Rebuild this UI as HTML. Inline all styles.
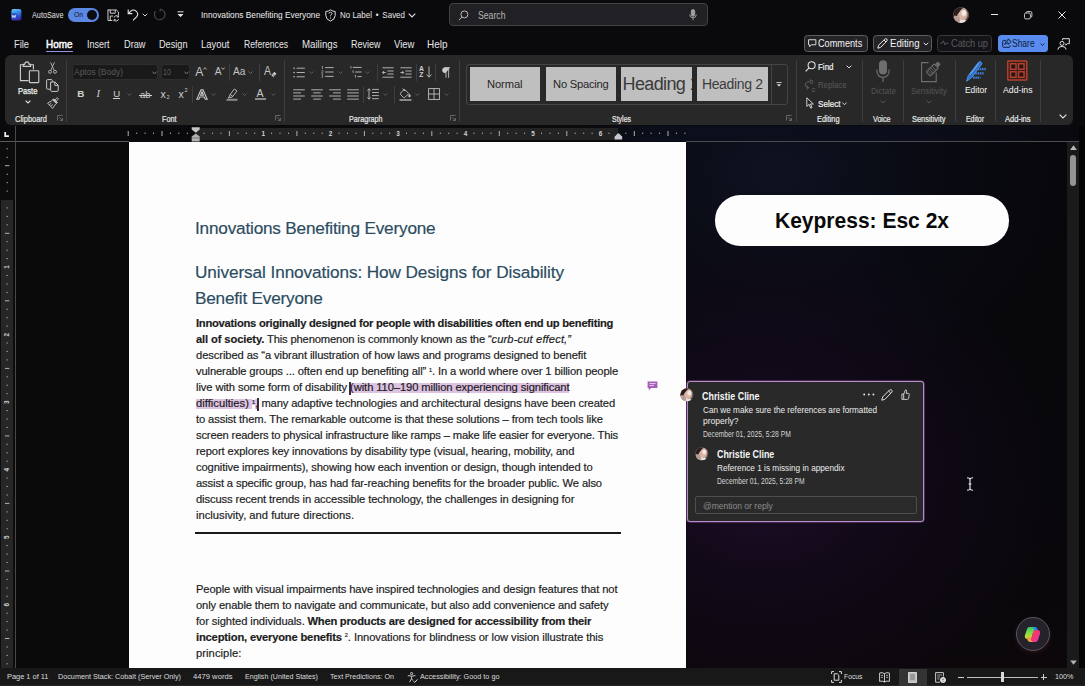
<!DOCTYPE html>
<html><head><meta charset="utf-8"><title>Word</title>
<style>
*{box-sizing:border-box;margin:0;padding:0}
html,body{width:1085px;height:686px;overflow:hidden;background:#0b0b0f;font-family:"Liberation Sans",sans-serif;}
.abs{position:absolute}
.t{position:absolute;white-space:pre;line-height:1;-webkit-text-stroke:0.18px currentColor}
.t .b{font-weight:bold}
.t .i{font-style:italic}
.t .sup{font-size:50%;position:relative;top:-0.62em}
.t .hl{background:linear-gradient(#dec2e2,#dec2e2) no-repeat 0 1.2px / 100% 11px}
#root{position:absolute;left:0;top:0;width:1085px;height:686px;overflow:hidden;
 background:#0a0a0d}
#rightbg{position:absolute;left:686px;top:141px;width:399px;height:527px;
 background:
  radial-gradient(ellipse 290px 250px at 80px 330px, rgba(34,15,46,0.95) 0%, rgba(24,11,34,0.6) 40%, rgba(12,7,18,0) 100%),
  radial-gradient(ellipse 310px 230px at 90px 30px, rgba(14,18,32,1) 0%, rgba(10,12,22,0.6) 55%, rgba(7,7,10,0) 100%),
  linear-gradient(180deg,#07070a 0%,#08070b 60%,#0b070b 100%)}
#leftbg{position:absolute;left:14px;top:141px;width:115px;height:527px;background:#0a0a0a}
#page{position:absolute;left:128.5px;top:141.7px;width:557.5px;height:527px;background:#fdfdfe}
#ribbon{position:absolute;left:5px;top:55.3px;width:1068px;height:70px;background:#282828;border-radius:6px}
#status{position:absolute;left:0;top:668.4px;width:1085px;height:18px;background:#181818;border-bottom:1.2px solid #2a2523}
.lbl{position:absolute;font-size:8.5px;-webkit-text-stroke:0.2px #e8e8e8;color:#e8e8e8;line-height:1;white-space:pre}
.tab{position:absolute;font-size:10.5px;color:#e6e6e6;line-height:1;white-space:pre;top:39px}
.sep{position:absolute;width:1px;background:#3e3e3e}
.st{position:absolute;font-size:8px;color:#dcdcdc;line-height:1;white-space:pre;top:673px}
svg{position:absolute;overflow:visible}
.tt{position:absolute;line-height:1;white-space:pre}
.tile{position:absolute;top:67.3px;width:70.5px;height:33.7px;background:#bfbfbf;color:#262626;display:flex;align-items:center;justify-content:center;overflow:hidden;white-space:pre;line-height:1}
.ct{font-size:9.3px;color:#ececec}
.cd{font-size:8.2px;color:#d4d4d4}
</style></head><body>
<div id="root">
<div id="leftbg"></div>
<div id="rightbg"></div>
<div id="page"></div>

<!-- ============ TITLE BAR ============ -->
<div id="titlebar">
  <!-- word icon -->
  <svg style="left:11px;top:9px" width="10.4" height="11.6" viewBox="0 0 10.4 11.6">
    <defs><linearGradient id="wg" x1="0" y1="0" x2="0.3" y2="1"><stop offset="0" stop-color="#6ad0f4"/><stop offset="0.4" stop-color="#3a8fe8"/><stop offset="0.75" stop-color="#2b52d0"/><stop offset="1" stop-color="#3b2aa8"/></linearGradient></defs>
    <rect x="0.4" y="0" width="10" height="11.6" rx="2" fill="url(#wg)"/>
    <rect x="0" y="4.4" width="5.8" height="5.6" rx="1.2" fill="#2a48c4"/>
    <path d="M1 5.8 L1.9 8.6 L2.9 6.4 L3.9 8.6 L4.8 5.8" stroke="#fff" stroke-width="0.75" fill="none"/>
  </svg>
  <div class="tt" style="transform:scaleX(0.8671);transform-origin:0 0;left:32px;top:10.6px;font-size:8.4px;color:#e4e4e4">AutoSave</div>
  <div class="abs" style="left:67.8px;top:8.3px;width:31px;height:13.4px;border-radius:7px;background:#5b88e4"></div>
  <div class="tt" style="transform:scaleX(0.8433);transform-origin:0 0;left:73.5px;top:10.5px;font-size:8px;color:#10131c">On</div>
  <div class="abs" style="left:86.6px;top:10px;width:10px;height:10px;border-radius:5px;background:#0c0c12"></div>
  <!-- save icon -->
  <svg style="left:107px;top:8.5px" width="12.4" height="12.4" viewBox="0 0 13 13" fill="none" stroke="#d8d8d8" stroke-width="1">
    <path d="M1 1 H9.8 L12 3.2 V6.4"/><path d="M1 0.6 V12 H5.6"/>
    <path d="M3.4 1 V4.4 H8.6 V1"/><path d="M3.4 12 V7.4 H6.4"/>
    <path d="M7.4 9 A2.5 2.5 0 0 1 11.9 8.1 M12.1 6.7 V8.4 H10.4"/>
    <path d="M12.1 10.6 A2.5 2.5 0 0 1 7.6 11.5 M7.4 12.9 V11.2 H9.1"/>
  </svg>
  <!-- undo -->
  <svg style="left:127px;top:8px" width="12" height="13" viewBox="0 0 12 13" fill="none" stroke="#e4e4e4" stroke-width="1.1">
    <path d="M1.2 1.5 V5.6 H5.3"/><path d="M1.4 5.4 L3.6 3.3 A4.1 4.1 0 0 1 9.8 8.6 L6 12.3"/>
  </svg>
  <svg style="left:141.5px;top:12.5px" width="6" height="4" viewBox="0 0 6 4" fill="none" stroke="#d0d0d0" stroke-width="1"><path d="M0.7 0.7 L3 3 L5.3 0.7"/></svg>
  <!-- redo (disabled) -->
  <svg style="left:153px;top:8px" width="13" height="13" viewBox="0 0 13 13" fill="none" stroke="#4a4a4e" stroke-width="1.1">
    <path d="M7.5 1.2 A5.3 5.3 0 1 1 2.5 3.2"/><path d="M7.2 0.8 V3.6"/>
  </svg>
  <!-- customize qat -->
  <svg style="left:177px;top:11px" width="7" height="7" viewBox="0 0 7 7" fill="none" stroke="#e0e0e0" stroke-width="1"><path d="M0.5 0.8 H6.5"/><path d="M0.9 3 L3.5 5.7 L6.1 3" fill="#e0e0e0"/></svg>
  <div class="tt" style="transform:scaleX(0.8648);transform-origin:0 0;left:200.5px;top:10px;font-size:9.6px;color:#ececec">Innovations Benefiting Everyone</div>
  <!-- shield -->
  <svg style="left:325px;top:8.5px" width="11" height="13" viewBox="0 0 11 13" fill="none" stroke="#dcdcdc" stroke-width="1">
    <path d="M5.5 0.8 Q7.6 2.4 10.2 2.5 V6.4 Q10.2 10.3 5.5 12.2 Q0.8 10.3 0.8 6.4 V2.5 Q3.4 2.4 5.5 0.8 Z"/>
    <path d="M3.9 4.6 Q4 3.2 5.5 3.2 Q7.1 3.3 7 4.7 Q6.9 5.6 5.5 6.4 V7.4" stroke-width="0.9"/><circle cx="5.5" cy="9.1" r="0.6" fill="#dcdcdc" stroke="none"/>
  </svg>
  <div class="tt" style="transform:scaleX(0.8318);transform-origin:0 0;left:339.5px;top:10px;font-size:9.6px;color:#e6e6e6">No Label  •  Saved</div>
  <svg style="left:407.5px;top:12.5px" width="8" height="5" viewBox="0 0 8 5" fill="none" stroke="#e0e0e0" stroke-width="1.1"><path d="M0.7 0.7 L4 4 L7.3 0.7"/></svg>
  <!-- search -->
  <div class="abs" style="left:449px;top:3px;width:259px;height:23px;border-radius:4px;background:#212125;border:1px solid #424246"></div>
  <svg style="left:458px;top:9.5px" width="11" height="11" viewBox="0 0 11 11" fill="none" stroke="#b8b8b8" stroke-width="1"><circle cx="6.4" cy="4.4" r="3.5"/><path d="M3.9 7 L0.8 10.2"/></svg>
  <div class="tt" style="transform:scaleX(0.8679);transform-origin:0 0;left:478px;top:10.6px;font-size:10px;color:#b4b4b4">Search</div>
  <svg style="left:689px;top:9px" width="8" height="12" viewBox="0 0 8 12" fill="none" stroke="#a0a0a0" stroke-width="1"><rect x="2.3" y="0.6" width="3.4" height="6.6" rx="1.7" fill="#a0a0a0"/><path d="M0.7 5.5 A3.3 3.3 0 0 0 7.3 5.5 M4 8.8 V11.2"/></svg>
  <!-- avatar -->
  <svg style="left:952.9px;top:6.9px" width="16" height="16.2" viewBox="0 0 18 18">
    <defs><clipPath id="av0"><circle cx="9" cy="9" r="8.8"/></clipPath></defs>
    <g clip-path="url(#av0)"><rect width="18" height="18" fill="#c2a49a"/>
      <path d="M0 0 H13 Q9 2 7.4 5.4 Q5 7 4.6 10 L2 9.4 L0 12 Z" fill="#2c1e1a"/>
      <path d="M9 3.6 Q13.4 2.6 14.6 6.4 Q15.2 9.6 13 12.6 Q10.6 14.6 8.4 12.8 Q6.4 10.6 6.8 7.4 Q7.4 4.4 9 3.6 Z" fill="#dcb6a6"/>
      <ellipse cx="12.4" cy="6.6" rx="2.6" ry="3.2" fill="#f1e9e4"/>
      <path d="M14.6 3.4 Q17.4 6 16.2 10.6 Q15.6 13 13.4 14.6 L18 18 V0 Z" fill="#3a2a26" opacity="0.8"/>
      <path d="M8 13 Q10.6 15.4 13.6 13.8 L15 18 H6 Z" fill="#e9e1dc"/>
      <path d="M0 12 L4.4 10.4 Q5.4 13.4 8.4 14.4 L7 18 H0 Z" fill="#b89a92"/>
    </g>
  </svg>
  <!-- window controls -->
  <div class="abs" style="left:991px;top:14px;width:7.4px;height:1.1px;background:#e8e8e8"></div>
  <svg style="left:1024.2px;top:10.8px" width="8.4" height="8.4" viewBox="0 0 10 10" fill="none" stroke="#e8e8e8" stroke-width="1"><rect x="0.6" y="2.4" width="7" height="7" rx="1.6"/><path d="M2.6 2.2 V2 Q2.6 0.6 4 0.6 H7.6 Q9.4 0.6 9.4 2.4 V6 Q9.4 7.4 8 7.4"/></svg>
  <svg style="left:1058.3px;top:11px" width="8" height="8" viewBox="0 0 9 9"><path d="M0.5 0.5 L8.5 8.5 M8.5 0.5 L0.5 8.5" stroke="#f0f0f0" stroke-width="1.1"/></svg>
</div>

<!-- ============ TABS ============ -->
<div class="tab" style="transform:scaleX(0.8864);transform-origin:0 0;left:13.5px">File</div>
<div class="tab" style="transform:scaleX(0.9459);transform-origin:0 0;left:46px;top:39.4px;color:#fff;-webkit-text-stroke:0.45px #fff;font-size:10.5px;">Home</div>
<div class="abs" style="left:46px;top:50.8px;width:27px;height:1.5px;background:#9496e4;border-radius:1px"></div>
<div class="tab" style="transform:scaleX(0.8566);transform-origin:0 0;left:87px">Insert</div>
<div class="tab" style="transform:scaleX(0.8770);transform-origin:0 0;left:124px">Draw</div>
<div class="tab" style="transform:scaleX(0.8719);transform-origin:0 0;left:159px">Design</div>
<div class="tab" style="transform:scaleX(0.9039);transform-origin:0 0;left:201px">Layout</div>
<div class="tab" style="transform:scaleX(0.8193);transform-origin:0 0;left:244px">References</div>
<div class="tab" style="transform:scaleX(0.9217);transform-origin:0 0;left:302px">Mailings</div>
<div class="tab" style="transform:scaleX(0.8566);transform-origin:0 0;left:351px">Review</div>
<div class="tab" style="transform:scaleX(0.9080);transform-origin:0 0;left:394px">View</div>
<div class="tab" style="transform:scaleX(0.9487);transform-origin:0 0;left:427px">Help</div>

<!-- right buttons -->
<div class="abs" style="left:804px;top:35px;width:63.5px;height:17px;border:1px solid #5e5e62;border-radius:3.5px;background:#242428"></div>
<svg style="left:807.5px;top:39px" width="8.4" height="8.4" viewBox="0 0 9 9" fill="none" stroke="#e6e6e6" stroke-width="1"><path d="M0.6 0.8 H8.4 V6.2 H3.6 L1.8 8.2 V6.2 H0.6 Z"/></svg>
<div class="tt" style="transform:scaleX(0.8974);transform-origin:0 0;left:818.4px;top:38.5px;font-size:10.2px;color:#f2f2f2">Comments</div>
<div class="abs" style="left:873px;top:35px;width:58.5px;height:17px;border:1px solid #5e5e62;border-radius:3.5px;background:#242428"></div>
<svg style="left:876.5px;top:37.5px" width="11" height="11" viewBox="0 0 11 11" fill="none" stroke="#e6e6e6" stroke-width="1"><path d="M0.8 10.2 L1.6 7.3 L7.9 1 Q8.9 0.2 9.9 1.1 Q10.7 2.1 9.9 3 L3.6 9.4 Z"/><path d="M7 2 L9 4"/></svg>
<div class="tt" style="transform:scaleX(0.9468);transform-origin:0 0;left:890px;top:38.5px;font-size:10.2px;color:#f2f2f2">Editing</div>
<svg style="left:923px;top:42px" width="6" height="4" viewBox="0 0 6 4" fill="none" stroke="#e0e0e0" stroke-width="1"><path d="M0.7 0.7 L3 3 L5.3 0.7"/></svg>
<div class="abs" style="left:937px;top:35px;width:55px;height:17px;border:1px solid #38383c;border-radius:3.5px;background:#141418"></div>
<svg style="left:940px;top:40px" width="9" height="6" viewBox="0 0 9 6" fill="none" stroke="#55555a" stroke-width="1"><path d="M0.4 3.2 H2 L3.4 0.8 L5 5 L6.2 3.2 H8.6"/></svg>
<div class="tt" style="transform:scaleX(0.9073);transform-origin:0 0;left:951px;top:38.5px;font-size:10.2px;color:#5a5a5e">Catch up</div>
<div class="abs" style="left:998px;top:35px;width:49.5px;height:17px;border-radius:3.5px;background:#5a8cf0"></div>
<svg style="left:1001.5px;top:38px" width="10" height="10" viewBox="0 0 10 10" fill="none" stroke="#10203c" stroke-width="1"><path d="M3.8 2.4 H1.6 Q0.7 2.4 0.7 3.3 V8.4 Q0.7 9.3 1.6 9.3 H7.2 Q8.1 9.3 8.1 8.4 V7.4"/><path d="M6 0.8 L9.2 3.6 L6 6.4 V4.8 Q4 4.7 2.8 6.6 Q3 3 6 2.5 Z"/></svg>
<div class="tt" style="transform:scaleX(0.8313);transform-origin:0 0;left:1012px;top:38.5px;font-size:10.2px;color:#0c1c38">Share</div>
<svg style="left:1039.5px;top:42.5px" width="5" height="3" viewBox="0 0 5 3" fill="none" stroke="#10203c" stroke-width="0.9"><path d="M0.5 0.5 L2.5 2.5 L4.5 0.5"/></svg>
<svg style="left:1056.5px;top:37.5px" width="13" height="12" viewBox="0 0 13 12" fill="none" stroke="#e0e0e0" stroke-width="1"><circle cx="5" cy="5.4" r="2"/><path d="M0.8 11.6 Q1 8.4 5 8.4 Q9 8.4 9.2 11.6"/><path d="M5.6 2.2 V0.7 H12.3 V5.6 H10.4 L8.8 7.2 V5.6"/></svg>

<div id="ribbon"></div>
<!-- ===== Clipboard ===== -->
<svg style="left:19px;top:60.5px" width="21" height="23" viewBox="0 0 21 23" fill="none" stroke="#cdcdcd" stroke-width="1.1">
  <path d="M4.2 3.8 H1.4 V19.6 H9.6"/><path d="M11.6 3.8 H14.4 V8.6"/>
  <path d="M4.2 5.4 V3.4 H5.6 Q6 0.9 7.9 0.9 Q9.8 0.9 10.2 3.4 H11.6 V5.4 Z"/>
  <rect x="10.4" y="9.8" width="9.4" height="11.8" rx="0.6"/>
</svg>
<div class="tt" style="left:17.8px;top:85.8px;font-size:9.4px;color:#f6f6f6;-webkit-text-stroke:0.25px #f6f6f6;transform:scaleX(0.8090);transform-origin:0 0">Paste</div>
<svg style="left:24.6px;top:99.8px" width="6" height="4" viewBox="0 0 6 4" fill="none" stroke="#e0e0e0" stroke-width="1.1"><path d="M0.6 0.6 L3 3 L5.4 0.6"/></svg>
<!-- cut -->
<svg style="left:47.5px;top:61.5px" width="9" height="12" viewBox="0 0 9 12" fill="none" stroke="#b8b8b8" stroke-width="0.9">
  <path d="M2.6 0.4 L6.2 8.4 M6.4 0.4 L2.8 8.4"/><circle cx="2" cy="9.8" r="1.5"/><circle cx="7" cy="9.8" r="1.5"/>
</svg>
<!-- copy -->
<svg style="left:46px;top:78.5px" width="13" height="13" viewBox="0 0 13 13" fill="none" stroke="#c8c8c8" stroke-width="1">
  <path d="M4 10.2 H1.6 Q0.6 10.2 0.6 9.2 V1.6 Q0.6 0.6 1.6 0.6 H5.4 Q6.4 0.6 6.4 1.6 V2.6"/>
  <path d="M4.6 3 H9 L12.2 6.2 V11.4 Q12.2 12.4 11.2 12.4 H5.6 Q4.6 12.4 4.6 11.4 Z"/><path d="M8.8 3.2 V6.4 H12"/>
</svg>
<!-- format painter -->
<svg style="left:46.5px;top:96.5px" width="12" height="12" viewBox="0 0 12 12" fill="none" stroke="#c8c8c8" stroke-width="0.9">
  <path d="M8 3 L10.2 0.6 L11.4 1.8 L9.2 4.2"/><path d="M6.6 1.8 L10.4 5.6 L9.4 6.6 L5.6 2.8 Z" fill="#c8c8c8"/>
  <path d="M5.4 3.4 L0.6 6.2 L5.6 11.4 L8.8 6.8"/><path d="M2.4 7.6 L4.2 6.4 M3.8 9.2 L5.8 7.6"/>
</svg>
<div class="lbl" style="left:14.5px;top:114.7px;transform:scaleX(0.8793);transform-origin:0 0">Clipboard</div>
<svg class="lau" style="left:56.9px;top:115.4px" width="6" height="6" viewBox="0 0 6 6" fill="none" stroke="#6c6c6c" stroke-width="0.9"><path d="M0.5 5.5 V0.5 H5.5"/><path d="M2.3 2.3 L5.4 5.4 M5.5 3 V5.5 H3"/></svg>
<div class="sep" style="left:65.5px;top:60px;height:62px"></div>

<!-- ===== Font ===== -->
<div class="abs" style="left:71.8px;top:63.8px;width:86.4px;height:16.4px;border-radius:3.5px;background:#191919;border:1px solid #2e2e2e"></div>
<div class="tt" style="left:73.5px;top:67.1px;font-size:9.6px;color:#5a5a5a;transform:scaleX(0.8834);transform-origin:0 0">Aptos (Body)</div>
<svg style="left:151.5px;top:70.5px" width="5" height="4" viewBox="0 0 5 4" fill="none" stroke="#8a8a8a" stroke-width="0.9"><path d="M0.5 0.7 L2.5 2.9 L4.5 0.7"/></svg>
<div class="abs" style="left:160.8px;top:63.8px;width:29.6px;height:16.4px;border-radius:3.5px;background:#191919;border:1px solid #2e2e2e"></div>
<div class="tt" style="left:162.5px;top:67.1px;font-size:9.6px;color:#5a5a5a;transform:scaleX(0.7496);transform-origin:0 0">10</div>
<svg style="left:183.5px;top:70.5px" width="5" height="4" viewBox="0 0 5 4" fill="none" stroke="#8a8a8a" stroke-width="0.9"><path d="M0.5 0.7 L2.5 2.9 L4.5 0.7"/></svg>
<!-- grow / shrink -->
<div class="tt" style="left:195.3px;top:65.8px;font-size:12.2px;color:#c4c4c4">A</div>
<svg style="left:203.2px;top:67px" width="4" height="3" viewBox="0 0 4 3" fill="none" stroke="#cfcfcf" stroke-width="0.8"><path d="M0.4 2.5 L2 0.6 L3.6 2.5"/></svg>
<div class="tt" style="left:214.8px;top:67.3px;font-size:10.2px;color:#c4c4c4">A</div>
<svg style="left:221.4px;top:66.8px" width="4" height="3" viewBox="0 0 4 3" fill="none" stroke="#cfcfcf" stroke-width="0.8"><path d="M0.4 0.5 L2 2.4 L3.6 0.5"/></svg>
<div class="sep" style="left:228.5px;top:64px;height:17px"></div>
<div class="tt" style="left:233px;top:67.4px;font-size:10.2px;color:#c4c4c4;transform:scaleX(0.9945);transform-origin:0 0">Aa</div>
<svg class="car" style="left:248px;top:71px" width="5" height="3" viewBox="0 0 5 3" fill="none" stroke="#707070" stroke-width="0.9"><path d="M0.5 0.5 L2.5 2.5 L4.5 0.5"/></svg>
<div class="sep" style="left:259px;top:64px;height:17px"></div>
<div class="tt" style="left:264.4px;top:65.4px;font-size:12.6px;color:#c4c4c4;transform:scaleX(0.84);transform-origin:0 0">A</div>
<svg style="left:269.5px;top:71px" width="7" height="7" viewBox="0 0 7 7" fill="#c8c8c8" stroke="#292929" stroke-width="0.7"><path d="M4.4 0.4 L6.8 2.8 L3.2 6.4 L0.8 4 Z"/><path d="M2.2 2.8 L4.4 5" stroke="#555"/></svg>
<!-- row 2 -->
<div class="tt" style="left:77.3px;top:89px;font-size:9.9px;font-weight:bold;color:#d2d2d2">B</div>
<div class="tt" style="left:96.5px;top:88.5px;font-size:10.5px;font-style:italic;font-family:'Liberation Serif',serif;color:#cfcfcf">I</div>
<div class="tt" style="left:113.2px;top:88.8px;font-size:9.6px;color:#cfcfcf;">U</div>
<div class="abs" style="left:113px;top:98px;width:6.6px;height:1px;background:#cfcfcf"></div>
<svg class="car" style="left:127px;top:93px" width="5" height="3" viewBox="0 0 5 3" fill="none" stroke="#606060" stroke-width="0.9"><path d="M0.5 0.5 L2.5 2.5 L4.5 0.5"/></svg>
<div class="tt" style="left:140px;top:89.5px;font-size:9.5px;color:#cfcfcf;transform:scaleX(0.9926);transform-origin:0 0">ab</div>
<div class="abs" style="left:139px;top:94.5px;width:13px;height:1px;background:#cfcfcf"></div>
<div class="tt" style="left:160.5px;top:89px;font-size:10.5px;color:#cfcfcf">x</div>
<div class="tt" style="left:166.5px;top:95px;font-size:5.5px;color:#cfcfcf">2</div>
<div class="tt" style="left:178.5px;top:89px;font-size:10.5px;color:#cfcfcf">x</div>
<div class="tt" style="left:184.5px;top:87.5px;font-size:5.5px;color:#cfcfcf">2</div>
<div class="sep" style="left:191.5px;top:86px;height:17px"></div>
<!-- text effects -->
<svg style="left:196px;top:88.8px" width="12" height="11.2" viewBox="0 0 12 13" preserveAspectRatio="none" fill="none" stroke="#c8c8c8" stroke-width="1.15"><path d="M0.8 12 L5 1 H7 L11.2 12 H9.2 L8.2 9.2 H3.8 L2.8 12 Z"/><path d="M4.6 7.2 L6 3.2 L7.4 7.2 Z"/></svg>
<svg class="car" style="left:211px;top:93px" width="5" height="3" viewBox="0 0 5 3" fill="none" stroke="#606060" stroke-width="0.9"><path d="M0.5 0.5 L2.5 2.5 L4.5 0.5"/></svg>
<!-- highlighter -->
<svg style="left:226px;top:87.5px" width="12" height="13" viewBox="0 0 12 13" fill="none" stroke="#c4c4c4" stroke-width="0.9"><path d="M4.2 6.4 L8.4 1 L11 3 L6.8 8.4 Z"/><path d="M4.2 6.4 L3.4 8.4 L5 9.6 L6.8 8.4"/><path d="M3.2 8.8 L2 9.8 H4.2"/><rect x="0.5" y="10.8" width="11" height="2" fill="#8a8a8a" stroke="none"/></svg>
<svg class="car" style="left:241.5px;top:93px" width="5" height="3" viewBox="0 0 5 3" fill="none" stroke="#606060" stroke-width="0.9"><path d="M0.5 0.5 L2.5 2.5 L4.5 0.5"/></svg>
<!-- font color -->
<div class="tt" style="left:256.6px;top:88px;font-size:10.6px;color:#c8c8c8">A</div>
<div class="abs" style="left:254.5px;top:98.3px;width:11px;height:2px;background:#8a8a8a"></div>
<svg class="car" style="left:270.5px;top:93px" width="5" height="3" viewBox="0 0 5 3" fill="none" stroke="#606060" stroke-width="0.9"><path d="M0.5 0.5 L2.5 2.5 L4.5 0.5"/></svg>
<div class="lbl" style="left:162px;top:114.7px;transform:scaleX(0.8522);transform-origin:0 0">Font</div>
<svg class="lau" style="left:275.4px;top:115.4px" width="6" height="6" viewBox="0 0 6 6" fill="none" stroke="#6c6c6c" stroke-width="0.9"><path d="M0.5 5.5 V0.5 H5.5"/><path d="M2.3 2.3 L5.4 5.4 M5.5 3 V5.5 H3"/></svg>
<div class="sep" style="left:284px;top:60px;height:62px"></div>
<!-- ===== Paragraph ===== -->
<!-- bullets -->
<svg style="left:292.5px;top:66.5px" width="12" height="11" viewBox="0 0 12 11" fill="#c0c0c0" stroke="#c0c0c0" stroke-width="0.9">
 <circle cx="1.1" cy="1.2" r="0.8" stroke="none"/><circle cx="1.1" cy="5.5" r="0.8" stroke="none"/><circle cx="1.1" cy="9.8" r="0.8" stroke="none"/>
 <path d="M3.6 1.2 H11.8 M3.6 5.5 H11.8 M3.6 9.8 H11.8"/></svg>
<svg class="car" style="left:309px;top:71px" width="5" height="3" viewBox="0 0 5 3" fill="none" stroke="#606060" stroke-width="0.9"><path d="M0.5 0.5 L2.5 2.5 L4.5 0.5"/></svg>
<!-- numbering -->
<svg style="left:320.5px;top:66px" width="13" height="12" viewBox="0 0 13 12" fill="none" stroke="#c0c0c0" stroke-width="0.9">
 <path d="M4.2 1.6 H12.6 M4.2 6 H12.6 M4.2 10.4 H12.6"/><path d="M0.6 0.8 L1.5 0.3 V3 M0.4 4.8 Q1.4 4 2 4.8 Q2.2 5.6 0.5 7.2 H2.2 M0.5 8.8 H2 L1.2 10 Q2.2 10.2 2 11 Q1.4 11.8 0.4 11.2" stroke-width="0.6"/></svg>
<svg class="car" style="left:337.5px;top:71px" width="5" height="3" viewBox="0 0 5 3" fill="none" stroke="#606060" stroke-width="0.9"><path d="M0.5 0.5 L2.5 2.5 L4.5 0.5"/></svg>
<!-- multilevel -->
<svg style="left:349.5px;top:66px" width="12" height="12" viewBox="0 0 12 12" fill="none" stroke="#c0c0c0" stroke-width="0.9">
 <path d="M2.8 1.4 H11.6 M5.2 6 H11.6 M7.4 10.6 H11.6"/><path d="M0.4 0.8 L1 0.4 V2.6 M2.6 5 L3.2 4.6 V7 M4.8 9.4 L5.4 9 V11.6" stroke-width="0.7"/></svg>
<svg class="car" style="left:364.5px;top:71px" width="5" height="3" viewBox="0 0 5 3" fill="none" stroke="#606060" stroke-width="0.9"><path d="M0.5 0.5 L2.5 2.5 L4.5 0.5"/></svg>
<div class="sep" style="left:376.5px;top:64px;height:17px"></div>
<!-- decrease indent -->
<svg style="left:381.5px;top:66.5px" width="12" height="11" viewBox="0 0 12 11" fill="none" stroke="#c0c0c0" stroke-width="0.9">
 <path d="M0.4 0.8 H11.6 M5.4 4 H11.6 M5.4 7 H11.6 M0.4 10.2 H11.6"/><path d="M3.8 5.5 H0.6 M2 3.9 L0.5 5.5 L2 7.1" stroke-width="0.9"/></svg>
<!-- increase indent -->
<svg style="left:399.5px;top:66.5px" width="12" height="11" viewBox="0 0 12 11" fill="none" stroke="#c0c0c0" stroke-width="0.9">
 <path d="M0.4 0.8 H11.6 M5.4 4 H11.6 M5.4 7 H11.6 M0.4 10.2 H11.6"/><path d="M0.4 5.5 H3.6 M2.2 3.9 L3.7 5.5 L2.2 7.1" stroke-width="0.9"/></svg>
<div class="sep" style="left:415.5px;top:64px;height:17px"></div>
<!-- sort -->
<div class="tt" style="left:419px;top:65.5px;font-size:6.8px;font-weight:bold;color:#cfcfcf">A</div>
<div class="tt" style="left:419.2px;top:72px;font-size:6.8px;font-weight:bold;color:#cfcfcf">Z</div>
<svg style="left:426px;top:66px" width="6" height="12" viewBox="0 0 6 12" fill="none" stroke="#c0c0c0" stroke-width="0.9"><path d="M3 0.4 V11 M0.6 8.6 L3 11.2 L5.4 8.6"/></svg>
<div class="sep" style="left:435px;top:64px;height:17px"></div>
<!-- pilcrow -->
<svg style="left:441.5px;top:66.5px" width="8" height="11" viewBox="0 0 8 11" fill="none" stroke="#c0c0c0" stroke-width="0.9"><path d="M7.6 0.6 H3.4 Q0.6 0.6 0.6 3.2 Q0.6 5.8 3.4 5.8 Z" fill="#cfcfcf"/><path d="M4 0.6 V10.8 M6.6 0.6 V10.8"/></svg>
<!-- row 2: alignments -->
<svg style="left:292.5px;top:88.5px" width="12" height="11" viewBox="0 0 12 11" stroke="#c0c0c0" stroke-width="0.9"><path d="M0.2 0.8 H11.8 M0.2 3.9 H8 M0.2 7 H11.8 M0.2 10.1 H8"/></svg>
<svg style="left:310.5px;top:88.5px" width="12" height="11" viewBox="0 0 12 11" stroke="#c0c0c0" stroke-width="0.9"><path d="M0.2 0.8 H11.8 M2.2 3.9 H9.8 M0.2 7 H11.8 M2.2 10.1 H9.8"/></svg>
<svg style="left:328.8px;top:88.5px" width="12" height="11" viewBox="0 0 12 11" stroke="#c0c0c0" stroke-width="0.9"><path d="M0.2 0.8 H11.8 M4 3.9 H11.8 M0.2 7 H11.8 M4 10.1 H11.8"/></svg>
<svg style="left:347px;top:88.5px" width="12" height="11" viewBox="0 0 12 11" stroke="#c0c0c0" stroke-width="0.9"><path d="M0.2 0.8 H11.8 M0.2 3.9 H11.8 M0.2 7 H11.8 M0.2 10.1 H11.8"/></svg>
<div class="sep" style="left:363px;top:86px;height:17px"></div>
<!-- line spacing -->
<svg style="left:367px;top:88px" width="12" height="12" viewBox="0 0 12 12" fill="none" stroke="#c0c0c0" stroke-width="0.9"><path d="M5 1.4 H11.8 M5 4.5 H11.8 M5 7.6 H11.8 M5 10.7 H11.8"/><path d="M2 0.8 V11.2 M0.4 2.6 L2 0.8 L3.6 2.6 M0.4 9.4 L2 11.2 L3.6 9.4" stroke-width="0.9"/></svg>
<svg class="car" style="left:382.5px;top:93px" width="5" height="3" viewBox="0 0 5 3" fill="none" stroke="#606060" stroke-width="0.9"><path d="M0.5 0.5 L2.5 2.5 L4.5 0.5"/></svg>
<div class="sep" style="left:394px;top:86px;height:17px"></div>
<!-- shading -->
<svg style="left:398.5px;top:87.5px" width="13" height="13" viewBox="0 0 13 13" fill="none" stroke="#c8c8c8" stroke-width="0.9"><path d="M5.4 1.2 L9.8 5.6 L6 9.4 Q5.2 10 4.4 9.4 L1.6 6.6 Q1 5.8 1.6 5 Z"/><path d="M3.6 0.6 L6.2 3.2"/><path d="M10.6 6.4 Q11.8 8 11 8.8 Q10.2 9.2 9.8 8.4 Q9.6 7.6 10.6 6.4 Z" fill="#c8c8c8"/><rect x="0.5" y="11" width="12" height="2" fill="#8a8a8a" stroke="none"/></svg>
<svg class="car" style="left:415px;top:93px" width="5" height="3" viewBox="0 0 5 3" fill="none" stroke="#606060" stroke-width="0.9"><path d="M0.5 0.5 L2.5 2.5 L4.5 0.5"/></svg>
<!-- borders -->
<svg style="left:427.5px;top:88px" width="12" height="12" viewBox="0 0 12 12" fill="none" stroke="#c0c0c0" stroke-width="0.9"><rect x="0.6" y="0.6" width="10.8" height="10.8"/><path d="M6 0.6 V11.4 M0.6 6 H11.4"/></svg>
<svg class="car" style="left:443.5px;top:93px" width="5" height="3" viewBox="0 0 5 3" fill="none" stroke="#606060" stroke-width="0.9"><path d="M0.5 0.5 L2.5 2.5 L4.5 0.5"/></svg>
<div class="lbl" style="left:349px;top:114.7px;transform:scaleX(0.8438);transform-origin:0 0">Paragraph</div>
<svg class="lau" style="left:450.4px;top:115.4px" width="6" height="6" viewBox="0 0 6 6" fill="none" stroke="#6c6c6c" stroke-width="0.9"><path d="M0.5 5.5 V0.5 H5.5"/><path d="M2.3 2.3 L5.4 5.4 M5.5 3 V5.5 H3"/></svg>
<div class="sep" style="left:459px;top:60px;height:62px"></div>

<!-- ===== Styles ===== -->
<div class="abs" style="left:466px;top:63.5px;width:321.5px;height:41px;border:1px solid #444;border-radius:3px"></div>
<div class="tile" style="left:469.5px"><span style="font-size:11.2px;letter-spacing:-0.1px">Normal</span></div>
<div class="tile" style="left:545.5px"><span style="font-size:11.2px;letter-spacing:-0.25px">No Spacing</span></div>
<div class="tile" style="left:621px;justify-content:flex-start"><span style="font-size:18px;letter-spacing:-0.62px;margin-left:1.5px;color:#3a3a3a">Heading 1</span></div>
<div class="tile" style="left:697px"><span style="font-size:14px;letter-spacing:-0.35px;color:#3c3c3c">Heading 2</span></div>
<div class="sep" style="left:771px;top:64px;height:40px;background:#444"></div>
<svg style="left:776px;top:81.5px" width="6" height="5" viewBox="0 0 6 5" fill="#e0e0e0" stroke="#e0e0e0" stroke-width="0.8"><path d="M0.3 0.5 H5.7" fill="none"/><path d="M0.8 2.2 H5.2 L3 4.5 Z" stroke="none"/></svg>
<div class="lbl" style="left:612px;top:114.7px;transform:scaleX(0.8205);transform-origin:0 0">Styles</div>
<svg class="lau" style="left:785.9px;top:115.4px" width="6" height="6" viewBox="0 0 6 6" fill="none" stroke="#6c6c6c" stroke-width="0.9"><path d="M0.5 5.5 V0.5 H5.5"/><path d="M2.3 2.3 L5.4 5.4 M5.5 3 V5.5 H3"/></svg>
<div class="sep" style="left:795.5px;top:60px;height:62px"></div>

<!-- ===== Editing ===== -->
<svg style="left:804.5px;top:60.5px" width="11" height="11" viewBox="0 0 11 11" fill="none" stroke="#e0e0e0" stroke-width="1.1"><circle cx="6.6" cy="4.2" r="3.5"/><path d="M4.1 6.8 L0.6 10.4"/></svg>
<div class="tt" style="left:818px;top:61.5px;font-size:9.6px;color:#f4f4f4;-webkit-text-stroke:0.2px #f4f4f4;transform:scaleX(0.8301);transform-origin:0 0">Find</div>
<svg style="left:845.5px;top:65px" width="6" height="4" viewBox="0 0 6 4" fill="none" stroke="#e0e0e0" stroke-width="1"><path d="M0.6 0.6 L3 3 L5.4 0.6"/></svg>
<svg style="left:803.5px;top:80px" width="8" height="12" viewBox="0 0 8 12" fill="none" stroke="#626262" stroke-width="1"><path d="M5.4 1.6 Q1.2 1.8 1.4 5.4 Q1.6 7.4 4.4 7.6"/><path d="M2.8 5.6 L4.8 7.6 L2.8 9.6"/></svg>
<div class="tt" style="left:809.6px;top:77.8px;font-size:7px;color:#666">b</div>
<div class="tt" style="left:811.8px;top:85.6px;font-size:7px;color:#666">c</div>
<div class="tt" style="left:818px;top:80px;font-size:9.6px;color:#5a5a5a;transform:scaleX(0.8096);transform-origin:0 0">Replace</div>
<svg style="left:805.5px;top:96.5px" width="9" height="12" viewBox="0 0 9 12" fill="none" stroke="#e0e0e0" stroke-width="0.9"><path d="M0.8 0.8 V9.4 L3 7.4 L4.8 11.2 L6 10.6 L4.4 7 H7.4 Z"/></svg>
<div class="tt" style="left:818px;top:98.5px;font-size:9.6px;color:#f4f4f4;-webkit-text-stroke:0.2px #f4f4f4;transform:scaleX(0.8436);transform-origin:0 0">Select</div>
<svg style="left:841.5px;top:101.5px" width="5" height="4" viewBox="0 0 5 4" fill="none" stroke="#e0e0e0" stroke-width="0.9"><path d="M0.5 0.6 L2.5 2.8 L4.5 0.6"/></svg>
<div class="lbl" style="left:816.7px;top:114.7px;transform:scaleX(0.8659);transform-origin:0 0">Editing</div>
<div class="sep" style="left:862px;top:60px;height:62px"></div>

<!-- ===== Voice ===== -->
<svg style="left:875.5px;top:59.5px" width="14" height="23" viewBox="0 0 14 23" fill="none" stroke="#6e6e6e" stroke-width="1.2"><rect x="3.6" y="0.8" width="6.8" height="13" rx="3.4" fill="#6e6e6e"/><path d="M0.8 9.6 Q0.8 17.4 7 17.4 Q13.2 17.4 13.2 9.6 M7 17.6 V22"/></svg>
<div class="tt" style="left:870.5px;top:86px;font-size:9.6px;color:#555;transform:scaleX(0.8373);transform-origin:0 0">Dictate</div>
<svg style="left:879.5px;top:100px" width="6" height="4" viewBox="0 0 6 4" fill="none" stroke="#555" stroke-width="1"><path d="M0.6 0.6 L3 3 L5.4 0.6"/></svg>
<div class="lbl" style="left:873px;top:114.7px;transform:scaleX(0.8415);transform-origin:0 0">Voice</div>
<div class="sep" style="left:903px;top:60px;height:62px"></div>

<!-- ===== Sensitivity ===== -->
<svg style="left:919.5px;top:59.5px" width="21" height="23" viewBox="0 0 21 23" fill="none" stroke="#6e6e6e" stroke-width="1.1">
 <path d="M8.6 2.6 H1.6 V21.6 H16.2 V12.4"/>
 <g transform="translate(12.2,10) rotate(-45)"><rect x="-5.6" y="-2.9" width="11.2" height="5.8" rx="0.6" fill="#292929"/><path d="M-3.4 -2.9 V2.9 M-1.4 -2.9 V2.9 M0.6 -2.9 V2.9 M2.6 -2.9 V2.9" stroke-width="0.8"/><rect x="6.4" y="-2" width="3.6" height="4" fill="#6e6e6e" stroke="none"/><path d="M5.6 -1.2 H6.6 M5.6 1.2 H6.6"/></g>
</svg>
<div class="tt" style="left:911px;top:86px;font-size:9.6px;color:#555;transform:scaleX(0.8336);transform-origin:0 0">Sensitivity</div>
<svg style="left:926px;top:100px" width="6" height="4" viewBox="0 0 6 4" fill="none" stroke="#555" stroke-width="1"><path d="M0.6 0.6 L3 3 L5.4 0.6"/></svg>
<div class="lbl" style="left:912px;top:114.7px;transform:scaleX(0.8755);transform-origin:0 0">Sensitivity</div>
<div class="sep" style="left:954.5px;top:60px;height:62px"></div>

<!-- ===== Editor ===== -->
<svg style="left:964.5px;top:59.5px" width="22" height="23" viewBox="0 0 22 23" fill="none">
 <path d="M1.6 21.2 L3.4 15.4 L13.4 2.4 Q14.6 1 16 2 Q17.4 3.2 16.4 4.6 L6.6 17.6 Z" fill="#2f6fc8" stroke="#4a94ec" stroke-width="1"/>
 <path d="M5.2 14.6 L14 3.2" stroke="#8cc0ff" stroke-width="0.8"/>
 <path d="M12.4 9.2 H20.8 M10.2 13.4 H18.6 M8 17.6 H15.4" stroke="#3a82e0" stroke-width="2.2" stroke-dasharray="1.6 0.7"/>
</svg>
<div class="tt" style="left:964.5px;top:84.8px;font-size:9.8px;color:#f4f4f4;transform:scaleX(0.8596);transform-origin:0 0">Editor</div>
<div class="lbl" style="left:965.5px;top:114.7px;transform:scaleX(0.8101);transform-origin:0 0">Editor</div>
<div class="sep" style="left:995px;top:60px;height:62px"></div>

<!-- ===== Add-ins ===== -->
<svg style="left:1007.4px;top:60.4px" width="20.6" height="21" viewBox="0 0 21 21" fill="none" stroke="#b44030" stroke-width="1.5"><rect x="0.8" y="0.8" width="19.4" height="19.4" rx="0.6" fill="#3a1e1a"/><rect x="3.6" y="3.6" width="5.6" height="5.6" fill="#241414"/><rect x="11.8" y="3.6" width="5.6" height="5.6" fill="#241414"/><rect x="3.6" y="11.8" width="5.6" height="5.6" fill="#241414"/><rect x="11.8" y="11.8" width="5.6" height="5.6" fill="#241414"/></svg>
<div class="tt" style="left:1003px;top:84.8px;font-size:9.8px;color:#f4f4f4;transform:scaleX(0.8881);transform-origin:0 0">Add-ins</div>
<div class="lbl" style="left:1004.5px;top:114.7px;transform:scaleX(0.8846);transform-origin:0 0">Add-ins</div>
<div class="sep" style="left:1039.5px;top:60px;height:62px"></div>
<svg style="left:1059px;top:113.5px" width="8" height="5" viewBox="0 0 8 5" fill="none" stroke="#e8e8e8" stroke-width="1.1"><path d="M0.6 0.6 L4 4 L7.4 0.6"/></svg>

<!-- ===== RULERS ===== -->
<div class="abs" style="left:0;top:126px;width:1085px;height:15px;background:linear-gradient(90deg,#0a0a0c 0%,#0a0a0c 54%,#0b0f1c 60%,#0b0e1a 85%,#09090d 100%)"></div>
<div class="abs" style="left:195.7px;top:127.5px;width:422.7px;height:12.4px;background:#232323"></div>
<div class="abs" style="left:0;top:141px;width:129px;height:1px;background:#585858"></div><div class="abs" style="left:686px;top:141px;width:393px;height:1px;background:#4c4c50"></div>
<div class="abs" style="left:15.2px;top:126px;width:1px;height:542px;background:#484848"></div>
<svg style="left:0;top:126px" width="700" height="16" viewBox="0 0 700 16">
 <path d="M5.2 6 V10.2 H8.9" stroke="#f0f0f0" stroke-width="1.7" fill="none"/>
 <g fill="#a4a4a4"><rect x="127.7" y="5" width="1" height="5" fill="#b0b0b0"/><rect x="136.2" y="6.6" width="1" height="1.4"/><rect x="144.6" y="6.6" width="1" height="1.4"/><rect x="153.0" y="6.6" width="1" height="1.4"/><rect x="161.5" y="5" width="1" height="5" fill="#b0b0b0"/><rect x="169.9" y="6.6" width="1" height="1.4"/><rect x="178.3" y="6.6" width="1" height="1.4"/><rect x="186.8" y="6.6" width="1" height="1.4"/><rect x="203.6" y="6.6" width="1" height="1.4"/><rect x="212.1" y="6.6" width="1" height="1.4"/><rect x="220.5" y="6.6" width="1" height="1.4"/><rect x="228.9" y="5" width="1" height="5" fill="#b0b0b0"/><rect x="237.4" y="6.6" width="1" height="1.4"/><rect x="245.8" y="6.6" width="1" height="1.4"/><rect x="254.2" y="6.6" width="1" height="1.4"/><text x="263.2" y="9.8" font-size="6.4" font-weight="bold" text-anchor="middle" font-family="Liberation Sans" fill="#d2d2d2">1</text><rect x="271.1" y="6.6" width="1" height="1.4"/><rect x="279.5" y="6.6" width="1" height="1.4"/><rect x="288.0" y="6.6" width="1" height="1.4"/><rect x="296.4" y="5" width="1" height="5" fill="#b0b0b0"/><rect x="304.8" y="6.6" width="1" height="1.4"/><rect x="313.3" y="6.6" width="1" height="1.4"/><rect x="321.7" y="6.6" width="1" height="1.4"/><text x="330.6" y="9.8" font-size="6.4" font-weight="bold" text-anchor="middle" font-family="Liberation Sans" fill="#d2d2d2">2</text><rect x="338.6" y="6.6" width="1" height="1.4"/><rect x="347.0" y="6.6" width="1" height="1.4"/><rect x="355.4" y="6.6" width="1" height="1.4"/><rect x="363.9" y="5" width="1" height="5" fill="#b0b0b0"/><rect x="372.3" y="6.6" width="1" height="1.4"/><rect x="380.7" y="6.6" width="1" height="1.4"/><rect x="389.2" y="6.6" width="1" height="1.4"/><text x="398.1" y="9.8" font-size="6.4" font-weight="bold" text-anchor="middle" font-family="Liberation Sans" fill="#d2d2d2">3</text><rect x="406.0" y="6.6" width="1" height="1.4"/><rect x="414.5" y="6.6" width="1" height="1.4"/><rect x="422.9" y="6.6" width="1" height="1.4"/><rect x="431.3" y="5" width="1" height="5" fill="#b0b0b0"/><rect x="439.8" y="6.6" width="1" height="1.4"/><rect x="448.2" y="6.6" width="1" height="1.4"/><rect x="456.6" y="6.6" width="1" height="1.4"/><text x="465.6" y="9.8" font-size="6.4" font-weight="bold" text-anchor="middle" font-family="Liberation Sans" fill="#d2d2d2">4</text><rect x="473.5" y="6.6" width="1" height="1.4"/><rect x="481.9" y="6.6" width="1" height="1.4"/><rect x="490.4" y="6.6" width="1" height="1.4"/><rect x="498.8" y="5" width="1" height="5" fill="#b0b0b0"/><rect x="507.2" y="6.6" width="1" height="1.4"/><rect x="515.7" y="6.6" width="1" height="1.4"/><rect x="524.1" y="6.6" width="1" height="1.4"/><text x="533.0" y="9.8" font-size="6.4" font-weight="bold" text-anchor="middle" font-family="Liberation Sans" fill="#d2d2d2">5</text><rect x="541.0" y="6.6" width="1" height="1.4"/><rect x="549.4" y="6.6" width="1" height="1.4"/><rect x="557.9" y="6.6" width="1" height="1.4"/><rect x="566.3" y="5" width="1" height="5" fill="#b0b0b0"/><rect x="574.7" y="6.6" width="1" height="1.4"/><rect x="583.2" y="6.6" width="1" height="1.4"/><rect x="591.6" y="6.6" width="1" height="1.4"/><text x="600.5" y="9.8" font-size="6.4" font-weight="bold" text-anchor="middle" font-family="Liberation Sans" fill="#d2d2d2">6</text><rect x="608.5" y="6.6" width="1" height="1.4"/><rect x="625.3" y="6.6" width="1" height="1.4"/><rect x="633.8" y="5" width="1" height="5" fill="#b0b0b0"/><rect x="642.2" y="6.6" width="1" height="1.4"/><rect x="650.6" y="6.6" width="1" height="1.4"/><rect x="659.1" y="6.6" width="1" height="1.4"/><rect x="667.5" y="5" width="1" height="5" fill="#b0b0b0"/><rect x="675.9" y="6.6" width="1" height="1.4"/><rect x="684.4" y="6.6" width="1" height="1.4"/></g>
 <!-- indent markers -->
 <path d="M191.7 1.2 H199.7 V3.4 L195.7 6.8 L191.7 3.4 Z" fill="#c4c4c4"/>
 <path d="M195.7 7.4 L199.7 10.6 V15.4 H191.7 V10.6 Z" fill="#b0b0b0"/>
 <path d="M191.7 12 H199.7" stroke="#555" stroke-width="0.6"/>
 <path d="M618.4 7.2 Q619 7.2 622.2 10.6 V13.4 H614.6 V10.6 Q617.8 7.2 618.4 7.2 Z" fill="#c8c8d0"/>
</svg>
<!-- vertical ruler -->
<div class="abs" style="left:0;top:141.5px;width:14.5px;height:527px;background:#0c0c0c"></div>
<div class="abs" style="left:1.2px;top:199.5px;width:11.4px;height:469px;background:#262626"></div>
<svg style="left:0;top:141px" width="14" height="527" viewBox="0 0 14 527"><g fill="#a4a4a4"><rect x="6.5" y="7.3" width="1.4" height="1"/><rect x="6.5" y="15.8" width="1.4" height="1"/><rect x="5" y="24.2" width="4.4" height="1" fill="#b0b0b0"/><rect x="6.5" y="32.7" width="1.4" height="1"/><rect x="6.5" y="41.1" width="1.4" height="1"/><rect x="6.5" y="49.6" width="1.4" height="1"/><rect x="6.5" y="66.4" width="1.4" height="1"/><rect x="6.5" y="74.9" width="1.4" height="1"/><rect x="6.5" y="83.3" width="1.4" height="1"/><rect x="5" y="91.8" width="4.4" height="1" fill="#b0b0b0"/><rect x="6.5" y="100.2" width="1.4" height="1"/><rect x="6.5" y="108.7" width="1.4" height="1"/><rect x="6.5" y="117.1" width="1.4" height="1"/><text transform="translate(9.4,126.0) rotate(-90)" font-size="6.4" font-weight="bold" text-anchor="middle" font-family="Liberation Sans" fill="#d2d2d2">1</text><rect x="6.5" y="134.0" width="1.4" height="1"/><rect x="6.5" y="142.4" width="1.4" height="1"/><rect x="6.5" y="150.9" width="1.4" height="1"/><rect x="5" y="159.3" width="4.4" height="1" fill="#b0b0b0"/><rect x="6.5" y="167.8" width="1.4" height="1"/><rect x="6.5" y="176.2" width="1.4" height="1"/><rect x="6.5" y="184.6" width="1.4" height="1"/><text transform="translate(9.4,193.6) rotate(-90)" font-size="6.4" font-weight="bold" text-anchor="middle" font-family="Liberation Sans" fill="#d2d2d2">2</text><rect x="6.5" y="201.5" width="1.4" height="1"/><rect x="6.5" y="210.0" width="1.4" height="1"/><rect x="6.5" y="218.4" width="1.4" height="1"/><rect x="5" y="226.9" width="4.4" height="1" fill="#b0b0b0"/><rect x="6.5" y="235.3" width="1.4" height="1"/><rect x="6.5" y="243.7" width="1.4" height="1"/><rect x="6.5" y="252.2" width="1.4" height="1"/><text transform="translate(9.4,261.1) rotate(-90)" font-size="6.4" font-weight="bold" text-anchor="middle" font-family="Liberation Sans" fill="#d2d2d2">3</text><rect x="6.5" y="269.1" width="1.4" height="1"/><rect x="6.5" y="277.5" width="1.4" height="1"/><rect x="6.5" y="285.9" width="1.4" height="1"/><rect x="5" y="294.4" width="4.4" height="1" fill="#b0b0b0"/><rect x="6.5" y="302.8" width="1.4" height="1"/><rect x="6.5" y="311.3" width="1.4" height="1"/><rect x="6.5" y="319.7" width="1.4" height="1"/><text transform="translate(9.4,328.7) rotate(-90)" font-size="6.4" font-weight="bold" text-anchor="middle" font-family="Liberation Sans" fill="#d2d2d2">4</text><rect x="6.5" y="336.6" width="1.4" height="1"/><rect x="6.5" y="345.0" width="1.4" height="1"/><rect x="6.5" y="353.5" width="1.4" height="1"/><rect x="5" y="361.9" width="4.4" height="1" fill="#b0b0b0"/><rect x="6.5" y="370.4" width="1.4" height="1"/><rect x="6.5" y="378.8" width="1.4" height="1"/><rect x="6.5" y="387.3" width="1.4" height="1"/><text transform="translate(9.4,396.2) rotate(-90)" font-size="6.4" font-weight="bold" text-anchor="middle" font-family="Liberation Sans" fill="#d2d2d2">5</text><rect x="6.5" y="404.1" width="1.4" height="1"/><rect x="6.5" y="412.6" width="1.4" height="1"/><rect x="6.5" y="421.0" width="1.4" height="1"/><rect x="5" y="429.5" width="4.4" height="1" fill="#b0b0b0"/><rect x="6.5" y="437.9" width="1.4" height="1"/><rect x="6.5" y="446.4" width="1.4" height="1"/><rect x="6.5" y="454.8" width="1.4" height="1"/><text transform="translate(9.4,463.7) rotate(-90)" font-size="6.4" font-weight="bold" text-anchor="middle" font-family="Liberation Sans" fill="#d2d2d2">6</text><rect x="6.5" y="471.7" width="1.4" height="1"/><rect x="6.5" y="480.1" width="1.4" height="1"/><rect x="6.5" y="488.6" width="1.4" height="1"/><rect x="5" y="497.0" width="4.4" height="1" fill="#b0b0b0"/><rect x="6.5" y="505.5" width="1.4" height="1"/><rect x="6.5" y="513.9" width="1.4" height="1"/><rect x="6.5" y="522.3" width="1.4" height="1"/></g></svg>

<div id="status"></div>
<!-- ===== STATUS BAR ===== -->
<div class="st" style="left:7px;transform:scaleX(0.9267);transform-origin:0 0">Page 1 of 11</div>
<div class="st" style="left:58px;transform:scaleX(0.9041);transform-origin:0 0">Document Stack: Cobalt (Server Only)</div>
<div class="st" style="left:193px;transform:scaleX(0.9550);transform-origin:0 0">4479 words</div>
<div class="st" style="left:244.5px;transform:scaleX(0.8921);transform-origin:0 0">English (United States)</div>
<div class="st" style="left:330px;transform:scaleX(0.8939);transform-origin:0 0">Text Predictions: On</div>
<svg style="left:406.5px;top:671.5px" width="11" height="11" viewBox="0 0 11 11" fill="none" stroke="#dcdcdc" stroke-width="0.9"><circle cx="4.6" cy="1.6" r="1.1"/><path d="M0.8 3.6 Q4.6 4.8 8.4 3.6 M4.6 4.4 V6.6 M4.6 6.6 L2.6 10.2 M4.6 6.6 L5.6 8.4"/><path d="M6.4 9.2 L7.8 10.4 L10.4 7.4" stroke-width="1"/></svg>
<div class="st" style="left:420px;transform:scaleX(0.9074);transform-origin:0 0">Accessibility: Good to go</div>
<!-- right side -->
<svg style="left:831px;top:671px" width="11" height="12" viewBox="0 0 11 12" fill="none" stroke="#dcdcdc" stroke-width="1"><path d="M0.6 3 V0.6 H3 M8 0.6 H10.4 V3 M10.4 9 V11.4 H8 M3 11.4 H0.6 V9"/><path d="M3.2 2.8 H6.4 L7.8 4.2 V9.2 H3.2 Z"/></svg>
<div class="st" style="left:844px;transform:scaleX(0.8487);transform-origin:0 0">Focus</div>
<svg style="left:878.5px;top:671.5px" width="11" height="11" viewBox="0 0 11 11" fill="none" stroke="#dcdcdc" stroke-width="0.9"><path d="M5.5 1.6 Q3 0 0.6 1 V9.4 Q3 8.4 5.5 10 Q8 8.4 10.4 9.4 V1 Q8 0 5.5 1.6 Z M5.5 1.6 V10"/><path d="M2 3.4 H4 M2 5.4 H4 M7 3.4 H9 M7 5.4 H9" stroke-width="0.7"/></svg>
<div class="abs" style="left:899px;top:668.5px;width:27.5px;height:17.5px;background:#343434"></div>
<svg style="left:907.5px;top:671.5px" width="9" height="11" viewBox="0 0 9 11" fill="#bdbdbd" stroke="#e4e4e4" stroke-width="0.9"><rect x="0.6" y="0.6" width="7.8" height="9.8"/><path d="M2.2 3 H6.8 M2.2 5 H6.8 M2.2 7 H6.8" stroke="#555" stroke-width="0.7"/></svg>
<svg style="left:935px;top:671.5px" width="11" height="11" viewBox="0 0 11 11" fill="none" stroke="#dcdcdc" stroke-width="0.9"><path d="M5 10.2 H0.6 V0.6 H8.4 V4.6"/><path d="M2.2 3 H6.8 M2.2 5 H5 M2.2 7 H4.4" stroke-width="0.7"/><circle cx="8" cy="8" r="2.6" fill="#dcdcdc"/><path d="M8 6.8 V8.2 M8 9 V9.4" stroke="#1b1b1b" stroke-width="0.8"/></svg>
<div class="abs" style="left:958px;top:676.5px;width:5.5px;height:1px;background:#cfcfcf"></div>
<div class="abs" style="left:967px;top:676.5px;width:70.5px;height:1px;background:#bdbdbd"></div>
<div class="abs" style="left:1000.5px;top:672px;width:3px;height:10px;background:#d8d8d8"></div>
<div class="abs" style="left:1040.5px;top:676.5px;width:6px;height:1px;background:#cfcfcf"></div>
<div class="abs" style="left:1043px;top:674px;width:1px;height:6px;background:#cfcfcf"></div>
<div class="st" style="left:1055px;transform:scaleX(0.9038);transform-origin:0 0">100%</div>

<div class="t " style="left:195px;top:220.31px;font-size:17.2px;color:#2b4c5e;letter-spacing:-0.195px">Innovations Benefiting Everyone</div>
<div class="t " style="left:195px;top:263.61px;font-size:17.2px;color:#2b4c5e;letter-spacing:-0.092px">Universal Innovations: How Designs for Disability</div>
<div class="t " style="left:195px;top:290.31px;font-size:17.2px;color:#2b4c5e;letter-spacing:-0.213px">Benefit Everyone</div>
<div class="t " style="left:196px;top:318.36px;font-size:11.2px;color:#1c1c1c;letter-spacing:-0.250px"><span class="b">Innovations originally designed for people with disabilities often end up benefiting</span></div>
<div class="t " style="left:196px;top:334.36px;font-size:11.2px;color:#1c1c1c;letter-spacing:-0.123px"><span class="b">all of society.</span></div>
<div class="t " style="left:264.2px;top:334.36px;font-size:11.2px;color:#1c1c1c;letter-spacing:-0.145px"> This phenomenon is commonly known as the </div>
<div class="t " style="left:487.6px;top:334.36px;font-size:11.2px;color:#1c1c1c;letter-spacing:0.120px"><span class="i">“curb-cut effect,”</span></div>
<div class="t " style="left:196px;top:350.36px;font-size:11.2px;color:#1c1c1c;letter-spacing:-0.096px">described as “a vibrant illustration of how laws and programs designed to benefit</div>
<div class="t " style="left:196px;top:366.36px;font-size:11.2px;color:#1c1c1c;letter-spacing:-0.125px">vulnerable groups ... often end up benefiting all” <span class="sup">1</span>. In a world where over 1 billion people</div>
<div class="t " style="left:196px;top:382.36px;font-size:11.2px;color:#1c1c1c;letter-spacing:-0.094px">live with some form of disability <span class="hl">(with 110–190 million experiencing significant</span></div>
<div class="t " style="left:196px;top:398.36px;font-size:11.2px;color:#1c1c1c;letter-spacing:0.019px"><span class="hl">difficulties) </span><span class="sup hl">1</span><span class="hl">,</span></div>
<div class="t " style="left:258.4px;top:398.36px;font-size:11.2px;color:#1c1c1c;letter-spacing:-0.119px"> many adaptive technologies and architectural designs have been created</div>
<div class="t " style="left:196px;top:414.36px;font-size:11.2px;color:#1c1c1c;letter-spacing:-0.106px">to assist them. The remarkable outcome is that these solutions – from tech tools like</div>
<div class="t " style="left:196px;top:430.36px;font-size:11.2px;color:#1c1c1c;letter-spacing:-0.159px">screen readers to physical infrastructure like ramps – make life easier for everyone. This</div>
<div class="t " style="left:196px;top:446.36px;font-size:11.2px;color:#1c1c1c;letter-spacing:-0.109px">report explores key innovations by disability type (visual, hearing, mobility, and</div>
<div class="t " style="left:196px;top:462.36px;font-size:11.2px;color:#1c1c1c;letter-spacing:-0.119px">cognitive impairments), showing how each invention or design, though intended to</div>
<div class="t " style="left:196px;top:478.36px;font-size:11.2px;color:#1c1c1c;letter-spacing:-0.122px">assist a specific group, has had far-reaching benefits for the broader public. We also</div>
<div class="t " style="left:196px;top:494.36px;font-size:11.2px;color:#1c1c1c;letter-spacing:-0.105px">discuss recent trends in accessible technology, the challenges in designing for</div>
<div class="t " style="left:196px;top:510.36px;font-size:11.2px;color:#1c1c1c;letter-spacing:0.008px">inclusivity, and future directions.</div>
<div class="t " style="left:196px;top:583.66px;font-size:11.2px;color:#1c1c1c;letter-spacing:-0.111px">People with visual impairments have inspired technologies and design features that not</div>
<div class="t " style="left:196px;top:599.66px;font-size:11.2px;color:#1c1c1c;letter-spacing:-0.122px">only enable them to navigate and communicate, but also add convenience and safety</div>
<div class="t " style="left:196px;top:615.66px;font-size:11.2px;color:#1c1c1c;letter-spacing:-0.085px">for sighted individuals. </div>
<div class="t " style="left:307.5px;top:615.66px;font-size:11.2px;color:#1c1c1c;letter-spacing:-0.237px"><span class="b">When products are designed for accessibility from their</span></div>
<div class="t " style="left:196px;top:631.66px;font-size:11.2px;color:#1c1c1c;letter-spacing:-0.186px"><span class="b">inception, everyone benefits </span></div>
<div class="t " style="left:344.8px;top:631.66px;font-size:11.2px;color:#1c1c1c;letter-spacing:-0.079px"><span class="sup">2</span>. Innovations for blindness or low vision illustrate this</div>
<div class="t " style="left:196px;top:647.66px;font-size:11.2px;color:#1c1c1c;letter-spacing:0.062px">principle:</div>
<!-- ===== horizontal rule in doc ===== -->
<div class="abs" style="left:194.8px;top:531.5px;width:426.2px;height:2px;background:#1a1a1a"></div>
<!-- text cursor / selection start -->
<div class="abs" style="left:349.3px;top:381.5px;width:1.4px;height:13px;background:#3a2a3e"></div>
<div class="abs" style="left:257.3px;top:397.5px;width:1.3px;height:13px;background:#3a2a3e"></div>
<!-- comment anchor icon -->
<svg style="left:647px;top:381px" width="11" height="10" viewBox="0 0 11 10"><path d="M0.6 0.6 H10.4 V7 H4 L1.8 9.4 V7 H0.6 Z" fill="#a45cb8"/><path d="M2.4 2.6 H8.6 M2.4 4.6 H7" stroke="#ecd8f2" stroke-width="0.9"/></svg>

<!-- ===== keypress pill ===== -->
<div class="abs" style="left:714.8px;top:195.3px;width:294.4px;height:50.6px;border-radius:25.3px;background:#fdfdfd"></div>
<div class="tt" style="left:774.6px;top:209.8px;font-size:21.9px;font-weight:bold;color:#0a0a0a;transform:scaleX(0.9596);transform-origin:0 0">Keypress: Esc 2x</div>

<!-- ===== comment card ===== -->
<div class="abs" style="left:686.6px;top:381px;width:237.8px;height:141.4px;border-radius:3px;background:#292929;border:1.6px solid #b98acb;box-shadow:0 0 0 0.6px #6e4a7e"></div>
<svg style="left:680.2px;top:387.5px" width="13.6" height="13.6" viewBox="0 0 18 18">
  <defs><clipPath id="av1"><circle cx="9" cy="9" r="8.6"/></clipPath></defs>
  <g clip-path="url(#av1)"><rect width="18" height="18" fill="#c2a49a"/>
      <path d="M0 0 H13 Q9 2 7.4 5.4 Q5 7 4.6 10 L2 9.4 L0 12 Z" fill="#2c1e1a"/>
      <path d="M9 3.6 Q13.4 2.6 14.6 6.4 Q15.2 9.6 13 12.6 Q10.6 14.6 8.4 12.8 Q6.4 10.6 6.8 7.4 Q7.4 4.4 9 3.6 Z" fill="#dcb6a6"/>
      <ellipse cx="12.4" cy="6.6" rx="2.6" ry="3.2" fill="#f1e9e4"/>
      <path d="M14.6 3.4 Q17.4 6 16.2 10.6 Q15.6 13 13.4 14.6 L18 18 V0 Z" fill="#3a2a26" opacity="0.8"/>
      <path d="M8 13 Q10.6 15.4 13.6 13.8 L15 18 H6 Z" fill="#e9e1dc"/>
      <path d="M0 12 L4.4 10.4 Q5.4 13.4 8.4 14.4 L7 18 H0 Z" fill="#b89a92"/>
    </g>
</svg>
<div class="tt" style="left:701.8px;top:390.9px;font-size:10.5px;font-weight:bold;color:#f6f6f6;transform:scaleX(0.8495);transform-origin:0 0">Christie Cline</div>
<svg style="left:862.5px;top:393px" width="12" height="3" viewBox="0 0 12 3" fill="#e8e8e8"><circle cx="1.2" cy="1.5" r="0.95"/><circle cx="5.8" cy="1.5" r="0.95"/><circle cx="10.4" cy="1.5" r="0.95"/></svg>
<svg style="left:880.5px;top:388.5px" width="12" height="12" viewBox="0 0 12 12" fill="none" stroke="#e0e0e0" stroke-width="1"><path d="M0.8 11.2 L1.6 8 L8.6 1 Q9.8 0.2 10.8 1.2 Q11.6 2.2 10.8 3.2 L3.8 10.4 Z"/><path d="M7.6 2 L9.8 4.2"/></svg>
<svg style="left:901.2px;top:388.5px" width="9" height="11" viewBox="0 0 10 11" preserveAspectRatio="none" fill="none" stroke="#e0e0e0" stroke-width="0.9"><path d="M3 10.4 H1 V5 H3 Z"/><path d="M3 5.2 L5 0.8 Q6.6 0.8 6.2 2.6 L5.8 4.4 H8.4 Q9.4 4.6 9.2 5.6 L8.4 9.4 Q8.2 10.4 7.2 10.4 H3"/></svg>
<div class="tt ct" style="left:703.2px;top:405.6px;transform:scaleX(0.8820);transform-origin:0 0">Can we make sure the references are formatted</div>
<div class="tt ct" style="left:703.2px;top:417.1px;transform:scaleX(0.9187);transform-origin:0 0">properly?</div>
<div class="tt cd" style="left:703.2px;top:430.5px;transform:scaleX(0.8209);transform-origin:0 0">December 01, 2025, 5:28 PM</div>
<svg style="left:695.4px;top:446.8px" width="13.6" height="13.6" viewBox="0 0 18 18">
  <defs><clipPath id="av2"><circle cx="9" cy="9" r="8.6"/></clipPath></defs>
  <g clip-path="url(#av2)"><rect width="18" height="18" fill="#c2a49a"/>
      <path d="M0 0 H13 Q9 2 7.4 5.4 Q5 7 4.6 10 L2 9.4 L0 12 Z" fill="#2c1e1a"/>
      <path d="M9 3.6 Q13.4 2.6 14.6 6.4 Q15.2 9.6 13 12.6 Q10.6 14.6 8.4 12.8 Q6.4 10.6 6.8 7.4 Q7.4 4.4 9 3.6 Z" fill="#dcb6a6"/>
      <ellipse cx="12.4" cy="6.6" rx="2.6" ry="3.2" fill="#f1e9e4"/>
      <path d="M14.6 3.4 Q17.4 6 16.2 10.6 Q15.6 13 13.4 14.6 L18 18 V0 Z" fill="#3a2a26" opacity="0.8"/>
      <path d="M8 13 Q10.6 15.4 13.6 13.8 L15 18 H6 Z" fill="#e9e1dc"/>
      <path d="M0 12 L4.4 10.4 Q5.4 13.4 8.4 14.4 L7 18 H0 Z" fill="#b89a92"/>
    </g>
</svg>
<div class="tt" style="left:717.2px;top:449.1px;font-size:10.5px;font-weight:bold;color:#f6f6f6;transform:scaleX(0.8467);transform-origin:0 0">Christie Cline</div>
<div class="tt ct" style="left:717px;top:463.8px;transform:scaleX(0.8843);transform-origin:0 0">Reference 1 is missing in appendix</div>
<div class="tt cd" style="left:717px;top:477.5px;transform:scaleX(0.8180);transform-origin:0 0">December 01, 2025, 5:28 PM</div>
<div class="abs" style="left:695.3px;top:496.3px;width:221.3px;height:18px;border:1px solid #4e4e4e;border-radius:2px;background:#2a2a2a"></div>
<div class="tt" style="left:703.2px;top:501px;font-size:9.8px;color:#8c8c8c;transform:scaleX(0.8704);transform-origin:0 0">@mention or reply</div>

<!-- ===== scrollbar ===== -->
<div class="abs" style="left:1079px;top:126px;width:6px;height:542.4px;background:#050506"></div>
<div class="abs" style="left:1067px;top:142px;width:12px;height:526.4px;background:#1a1a1b"></div>
<svg style="left:1069.5px;top:145.2px" width="7" height="5" viewBox="0 0 7 5"><path d="M0.1 4.9 L3.5 0.3 L6.9 4.9 Z" fill="#b8b8b8"/></svg>
<div class="abs" style="left:1069.9px;top:155.1px;width:6.2px;height:30.6px;border-radius:3.1px;background:#939393"></div>
<svg style="left:1069.5px;top:659.8px" width="7" height="5" viewBox="0 0 7 5"><path d="M0.2 0.4 L3.5 4.8 L6.8 0.4 Z" fill="#b4b4b4"/></svg>

<!-- ===== copilot button ===== -->
<div class="abs" style="left:1016px;top:617.2px;width:34px;height:34px;border-radius:17px;background:#26222c;border:1px solid #5a5560;box-shadow:0 2px 5px rgba(120,60,40,0.25)"></div>
<svg style="left:1023.4px;top:624.8px" width="19" height="19" viewBox="0 0 19 19">
  <defs>
   <linearGradient id="cp1" x1="0" y1="0" x2="1" y2="1"><stop offset="0" stop-color="#20b0ff"/><stop offset="1" stop-color="#2a50e8"/></linearGradient>
   <linearGradient id="cp2" x1="0" y1="0" x2="0" y2="1"><stop offset="0" stop-color="#30d060"/><stop offset="1" stop-color="#d8e030"/></linearGradient>
   <linearGradient id="cp3" x1="0" y1="0" x2="1" y2="1"><stop offset="0" stop-color="#ff4040"/><stop offset="1" stop-color="#e030b8"/></linearGradient>
  </defs>
  <path d="M6.4 2 H12 Q13.8 2 14.4 3.8 L15.6 7.6 H10.4 L9.4 4.4 Q8.8 2.6 6.4 2 Z" fill="url(#cp1)"/>
  <path d="M2 10.2 Q1.2 13.4 4 14 L6.6 14 Q8.2 13.8 8.8 12 L11.2 4.4 Q10.6 2 8 2 H6.4 Q4.6 2.2 4 4 Z" fill="url(#cp2)"/>
  <path d="M12.6 17 H7 Q5.2 17 4.6 15.2 L3.6 12 H8.8 L9.6 14.6 Q10.2 16.4 12.6 17 Z" fill="#e8a03c"/>
  <path d="M17 8.8 Q17.8 5.6 15 5 L12.4 5 Q10.8 5.2 10.2 7 L7.8 14.6 Q8.4 17 11 17 H12.6 Q14.4 16.8 15 15 Z" fill="url(#cp3)"/>
</svg>

<!-- ===== mouse I-beam ===== -->
<svg style="left:965.5px;top:477px" width="8" height="14" viewBox="0 0 8 14" fill="none" stroke="#f0f0f0" stroke-width="1.1"><path d="M1 0.8 Q3.6 0.8 4 2.4 Q4.4 0.8 7 0.8 M4 2.2 V11.8 M1 13.2 Q3.6 13.2 4 11.6 Q4.4 13.2 7 13.2 M2.6 7 H5.4"/></svg>

</div>

</body></html>
